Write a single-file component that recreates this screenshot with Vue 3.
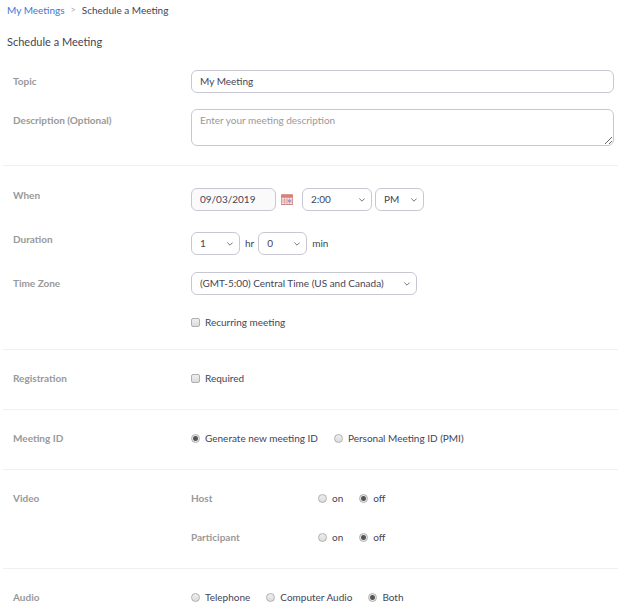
<template>
  <div class="page">
    <nav class="breadcrumb" aria-label="Breadcrumb">
      <a href="#">My Meetings</a>
      <span class="arrow">&gt;</span>
      <span>Schedule a Meeting</span>
    </nav>
    <h1 class="title">Schedule a Meeting</h1>

    <form @submit.prevent>
      <div class="section first">
        <div class="row">
          <label class="name tall" for="topic">Topic</label>
          <input id="topic" class="field" type="text" v-model="form.topic">
        </div>
        <div class="row description">
          <label class="name tall" for="description">Description (Optional)</label>
          <textarea id="description" class="field" placeholder="Enter your meeting description" v-model="form.description"></textarea>
        </div>
      </div>

      <div class="section time">
        <div class="row">
          <label class="name" for="date">When</label>
          <div class="controls">
            <input id="date" class="field date" type="text" readonly v-model="form.date">
            <button class="calendar" type="button" aria-label="Choose date">
              <svg viewBox="0 0 12 12" width="12" height="12">
                <rect x="0" y="0" width="12" height="11" rx="1" fill="#dd9a94" />
                <rect x="0" y="1" width="12" height="2" fill="#d97f74" />
                <rect x="1" y="4" width="10" height="6" fill="#f6e4e4" />
                <path d="M1 6h10M1 8h10M3.500 4v6M6 4v6M8.500 4v6" stroke="#dd9fa0" stroke-width=".8" />
                <rect x="7" y="6" width="3" height="2" fill="#a59bd0" />
                <rect x="0" y="10" width="12" height="1" fill="#c98a88" />
              </svg>
            </button>
            <span class="select hour">
              <select class="field" aria-label="Start time" v-model="form.time">
                <option v-for="item in times" :key="item">{{ item }}</option>
              </select>
              <svg viewBox="0 0 6 4" width="6" height="4"><path d="M.3 .5L3 3.200L5.700 .5" /></svg>
            </span>
            <span class="select small half">
              <select class="field" aria-label="AM or PM" v-model="form.half">
                <option>AM</option>
                <option>PM</option>
              </select>
              <svg viewBox="0 0 6 4" width="6" height="4"><path d="M.3 .5L3 3.200L5.700 .5" /></svg>
            </span>
          </div>
        </div>
        <div class="row duration">
          <label class="name" for="hours">Duration</label>
          <div class="controls">
            <span class="select small">
              <select id="hours" class="field" v-model="form.hours">
                <option v-for="item in 25" :key="item">{{ item - 1 }}</option>
              </select>
              <svg viewBox="0 0 6 4" width="6" height="4"><path d="M.3 .5L3 3.200L5.700 .5" /></svg>
            </span>
            <label class="unit" for="hours">hr</label>
            <span class="select small">
              <select id="minutes" class="field" v-model="form.minutes">
                <option v-for="item in minutes" :key="item">{{ item }}</option>
              </select>
              <svg viewBox="0 0 6 4" width="6" height="4"><path d="M.3 .5L3 3.200L5.700 .5" /></svg>
            </span>
            <label class="unit" for="minutes">min</label>
          </div>
        </div>
        <div class="row zone">
          <label class="name tall" for="zone">Time Zone</label>
          <div class="controls">
            <span class="select wide">
              <select id="zone" class="field" v-model="form.zone">
                <option>(GMT-5:00) Central Time (US and Canada)</option>
              </select>
              <svg viewBox="0 0 6 4" width="6" height="4"><path d="M.3 .5L3 3.200L5.700 .5" /></svg>
            </span>
          </div>
        </div>
        <div class="row recurring">
          <label class="choice"><input type="checkbox" v-model="form.recurring">Recurring meeting</label>
        </div>
      </div>

      <div class="section">
        <div class="row">
          <span class="name">Registration</span>
          <label class="choice"><input type="checkbox" v-model="form.registration">Required</label>
        </div>
      </div>

      <div class="section">
        <div class="row">
          <span id="idLabel" class="name">Meeting ID</span>
          <div class="choices" role="radiogroup" aria-labelledby="idLabel">
            <label v-for="item in idTypes" :key="item" class="choice">
              <input type="radio" name="idType" :value="item" v-model="form.idType">{{ item }}
            </label>
          </div>
        </div>
      </div>

      <div class="section">
        <div class="row">
          <span class="name">Video</span>
          <div class="videos">
            <div v-for="item in videos" :key="item.key" class="video" role="radiogroup" :aria-label="item.label">
              <span class="name">{{ item.label }}</span>
              <div class="choices">
                <label v-for="state in ['on', 'off']" :key="state" class="choice">
                  <input type="radio" :name="item.key" :value="state" v-model="form[item.key]">{{ state }}
                </label>
              </div>
            </div>
          </div>
        </div>
      </div>

      <div class="section last">
        <div class="row">
          <span id="audioLabel" class="name">Audio</span>
          <div class="choices" role="radiogroup" aria-labelledby="audioLabel">
            <label v-for="item in audios" :key="item" class="choice">
              <input type="radio" name="audio" :value="item" v-model="form.audio">{{ item }}
            </label>
          </div>
        </div>
      </div>
    </form>
  </div>
</template>

<script setup>
import { reactive } from 'vue'

// select options
const times = ['1:00', '1:30', '2:00', '2:30', '3:00', '3:30', '4:00', '4:30']
const minutes = ['0', '15', '30', '45']

// radio options
const idTypes = ['Generate new meeting ID', 'Personal Meeting ID (PMI)']
const audios = ['Telephone', 'Computer Audio', 'Both']
const videos = [
  { key: 'host', label: 'Host' },
  { key: 'participant', label: 'Participant' },
]

const form = reactive({
  topic: 'My Meeting',
  description: '',
  date: '09/03/2019',
  time: '2:00',
  half: 'PM',
  hours: '1',
  minutes: '0',
  zone: '(GMT-5:00) Central Time (US and Canada)',
  recurring: false,
  registration: false,
  idType: 'Generate new meeting ID',
  host: 'off',
  participant: 'off',
  audio: 'Both',
})
</script>

<style>
body {
  margin: 0;
  background-color: #fff;
}
</style>

<style scoped>
.page {
  padding: 2px 0 0 3px;
  font-family: Lato, "Liberation Sans", sans-serif;
  font-size: 10px;
  line-height: 16px;
  color: #444456;
}

* {
  box-sizing: border-box;
}

.breadcrumb {
  display: flex;
  gap: 6px;
  padding-left: 4px;

  a {
    color: #3c78dc;
    text-decoration: none;
  }

  .arrow {
    font-size: 9px;
    color: #aaa;
  }
}

.title {
  margin: 16px 0 20px;
  padding-left: 4px;
  font-size: 11px;
  font-weight: 400;
  line-height: 16px;
}

.section {
  padding: 20px 4px 23px 10px;
  border-bottom: 1px solid #f0f0f2;

  &.first {
    padding-top: 0;
    padding-bottom: 19px;
  }

  &.time {
    padding-top: 22px;
    padding-bottom: 19px;
  }

  &.last {
    padding-bottom: 0;
    border-bottom: none;
  }
}

.row {
  display: grid;
  grid-template-columns: 178px 1fr;
  align-items: start;

  &.description {
    margin-top: 16px;
  }

  &.duration {
    margin-top: 21px;
  }

  &.zone {
    margin-top: 17px;
  }

  &.recurring {
    margin-top: 19px;

    .choice {
      grid-column: 2;
    }
  }
}

.name {
  font-weight: 700;
  color: #999;

  &.tall {
    line-height: 23px;
  }
}

.time .name:not(.tall) {
  line-height: 14px;
}

.field {
  width: 100%;
  height: 23px;
  margin: 0;
  padding: 0 8px 2px;
  font: inherit;
  color: #444456;
  background-color: #fff;
  border: 1px solid #c8c8d2;
  border-radius: 6px;
  outline: none;
  appearance: none;

  &:focus {
    border-color: #2d8cff;
  }

  &::placeholder {
    color: #999;
    opacity: 1;
  }
}

textarea.field {
  display: block;
  height: 37px;
  padding-top: 2px;
}

.controls {
  display: flex;
  align-items: center;
}

.date {
  width: 85px;
  background-color: #fafafa;
}

.calendar {
  display: flex;
  margin: 0 9px 0 5px;
  padding: 0;
  background: none;
  border: none;
  cursor: pointer;
}

.select {
  display: grid;
  align-items: center;

  select,
  svg {
    grid-area: 1 / 1;
  }

  svg {
    justify-self: end;
    margin-right: 7px;
    fill: none;
    stroke: #747487;
    pointer-events: none;
  }

  &.hour {
    width: 70px;
  }

  &.small {
    width: 49px;
  }

  &.half {
    margin-left: 3px;
  }

  &.wide {
    width: 226px;
  }
}

.unit {
  padding: 0 4px 2px 5px;
}

.choices {
  display: flex;
  flex-wrap: wrap;
  column-gap: 16px;
}

.choice {
  display: flex;
  align-items: center;
  gap: 5px;

  input {
    width: 9px;
    height: 9px;
    margin: 1px 0 0;
    background: linear-gradient(#efefef, #dcdcdc);
    border: 1px solid #b0b0b0;
    border-radius: 2px;
    appearance: none;
  }

  input[type="radio"] {
    border-radius: 50%;
  }

  input[type="radio"]:checked {
    background: radial-gradient(circle, #555 0, #555 2px, #e8e8e8 3px);
  }

  input[type="checkbox"]:checked {
    background: #666;
  }
}

.videos {
  display: grid;
  gap: 23px;
}

.video {
  display: grid;
  grid-template-columns: 127px 1fr;
}
</style>
